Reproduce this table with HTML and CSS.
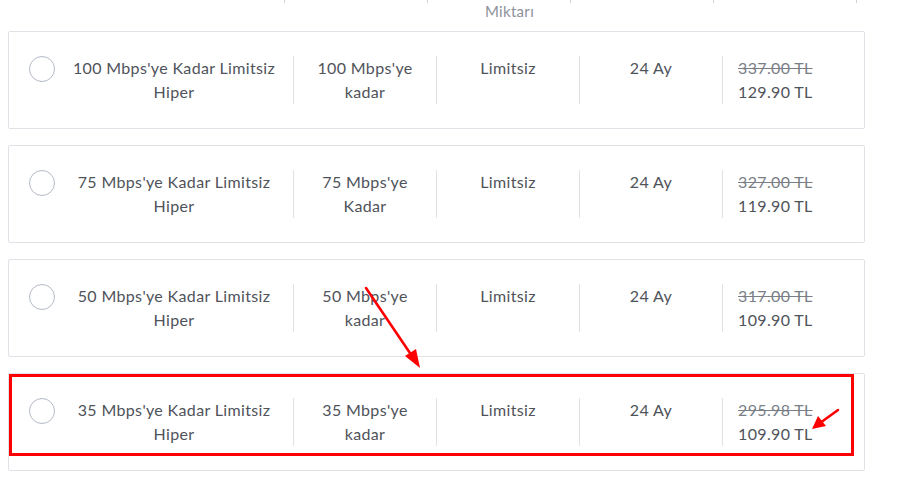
FILE: index.html
```html
<!DOCTYPE html>
<html lang="tr">
<head>
<meta charset="utf-8">
<link rel="stylesheet" href="styles.css">
</head>
<body>
<div class="page">
  <div class="head">
    <div class="h h1"></div>
    <div class="h sep"></div>
    <div class="h sep"><span class="hlabel">Miktarı</span></div>
    <div class="h sep"></div>
    <div class="h sep"></div>
    <div class="h sep end"></div>
  </div>

  <div class="card">
    <span class="radio"></span>
    <div class="col c1">100 Mbps'ye Kadar Limitsiz<br>Hiper</div>
    <div class="col">100 Mbps'ye<br>kadar</div>
    <div class="col">Limitsiz</div>
    <div class="col">24 Ay</div>
    <div class="col price"><s>337.00 TL</s><br>129.90 TL</div>
  </div>

  <div class="card">
    <span class="radio"></span>
    <div class="col c1">75 Mbps'ye Kadar Limitsiz<br>Hiper</div>
    <div class="col">75 Mbps'ye<br>Kadar</div>
    <div class="col">Limitsiz</div>
    <div class="col">24 Ay</div>
    <div class="col price"><s>327.00 TL</s><br>119.90 TL</div>
  </div>

  <div class="card">
    <span class="radio"></span>
    <div class="col c1">50 Mbps'ye Kadar Limitsiz<br>Hiper</div>
    <div class="col">50 Mbps'ye<br>kadar</div>
    <div class="col">Limitsiz</div>
    <div class="col">24 Ay</div>
    <div class="col price"><s>317.00 TL</s><br>109.90 TL</div>
  </div>

  <div class="card">
    <span class="radio"></span>
    <div class="col c1">35 Mbps'ye Kadar Limitsiz<br>Hiper</div>
    <div class="col">35 Mbps'ye<br>kadar</div>
    <div class="col">Limitsiz</div>
    <div class="col">24 Ay</div>
    <div class="col price"><s>295.98 TL</s><br>109.90 TL</div>
  </div>

  <div class="highlight"></div>
  <svg class="arrows" width="905" height="482" viewBox="0 0 905 482">
    <g stroke="#ff0000" stroke-width="2.6" stroke-linecap="round" fill="none">
      <line x1="366" y1="288" x2="414" y2="359"/>
      <line x1="838" y1="410" x2="820" y2="423"/>
    </g>
    <g fill="#ff0000">
      <polygon points="420,368 405,356 416,349"/>
      <polygon points="812,429 818,416 826,426"/>
    </g>
  </svg>
</div>
</body>
</html>
```
FILE: styles.css
```css
html, body {
  margin: 0;
  padding: 0;
  background: #ffffff;
}
body {
  padding: 0 8px;
  font-family: "Lato", "Open Sans", sans-serif;
  color: #4f535a;
  overflow: hidden;
  height: 482px;
}
.page {
  position: relative;
  width: 857px;
  display: flow-root;
}
.head {
  display: flex;
  height: 31px;
  font-size: 15px;
  line-height: 24px;
  color: #8d929b;
}
.h {
  position: relative;
  height: 3px;
}
.h1 { width: 276px; }
.h.sep {
  width: 142px;
  border-left: 1px solid #d0d2d8;
}
.h.end { width: 1px; }
.hlabel {
  display: block;
  margin-left: 57px;
  margin-top: -1px;
  line-height: 24px;
  letter-spacing: 0.3px;
  white-space: nowrap;
}
.card {
  display: flex;
  align-items: flex-start;
  border: 1px solid #e1e2e8;
  border-radius: 2px;
  padding: 24px 0 24px 20px;
  margin-bottom: 16px;
  font-size: 16px;
  line-height: 24px;
  letter-spacing: 0.35px;
}
.radio {
  width: 24px;
  height: 24px;
  border: 1px solid #b4bac6;
  border-radius: 50%;
  flex: none;
}
.col {
  width: 142px;
  text-align: center;
  border-left: 1px solid #dfe1e7;
  min-height: 48px;
  white-space: nowrap;
}
.col.c1 {
  width: 238px;
  border-left: none;
}
.col.price {
  text-align: left;
  padding-left: 15px;
  width: 110px;
}
.price s {
  color: #7a7f87;
}
.highlight {
  position: absolute;
  left: 1px;
  top: 374px;
  width: 839px;
  height: 76px;
  border: 3px solid #ff0000;
}
.arrows {
  position: absolute;
  left: -8px;
  top: 0;
}
```
